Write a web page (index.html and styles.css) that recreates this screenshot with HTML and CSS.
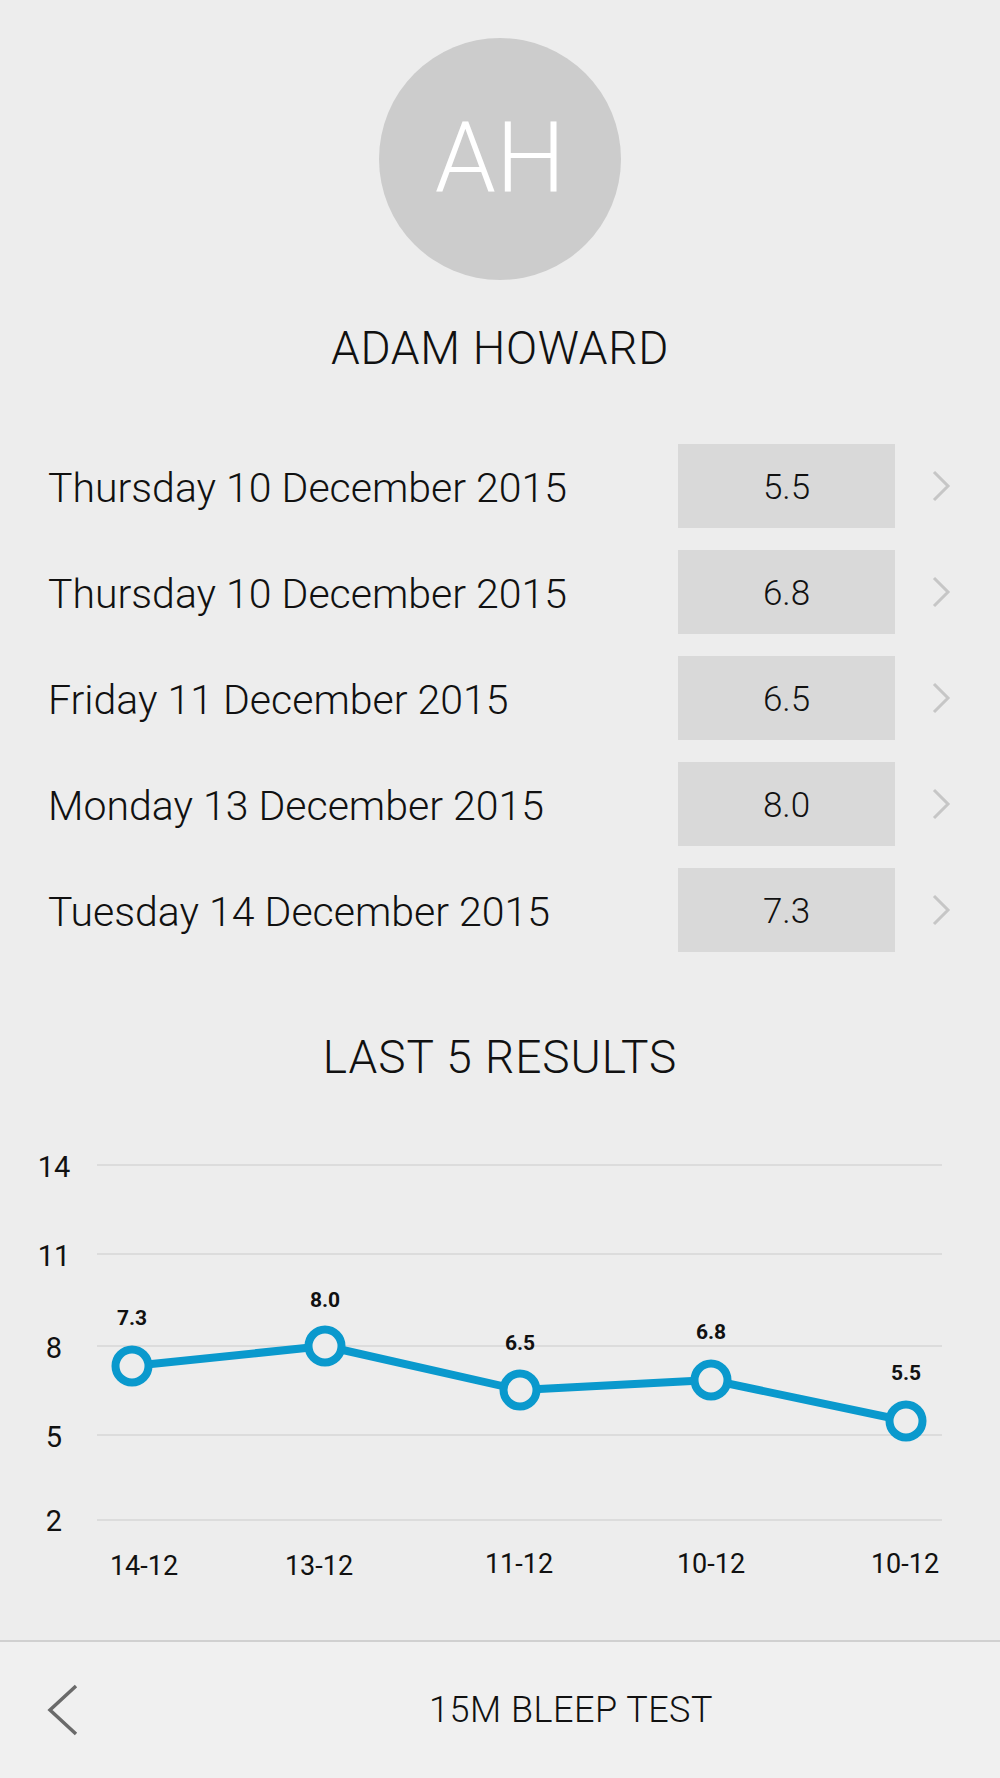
FILE: index.html
```html
<!DOCTYPE html>
<html lang="en">
<head>
<meta charset="utf-8">
<title>Adam Howard - 15M Bleep Test</title>
<link rel="stylesheet" href="styles.css">
</head>
<body>
<main class="content">
  <div class="avatar">AH</div>
  <h1 class="name">ADAM HOWARD</h1>

  <ul class="results">
    <li class="result">
      <span class="date">Thursday 10 December 2015</span>
      <span class="score">5.5</span>
      <svg class="chev" viewBox="0 0 20 32" width="20" height="32"><path d="M3 2 L17 16 L3 30"/></svg>
    </li>
    <li class="result">
      <span class="date">Thursday 10 December 2015</span>
      <span class="score">6.8</span>
      <svg class="chev" viewBox="0 0 20 32" width="20" height="32"><path d="M3 2 L17 16 L3 30"/></svg>
    </li>
    <li class="result">
      <span class="date">Friday 11 December 2015</span>
      <span class="score">6.5</span>
      <svg class="chev" viewBox="0 0 20 32" width="20" height="32"><path d="M3 2 L17 16 L3 30"/></svg>
    </li>
    <li class="result">
      <span class="date">Monday 13 December 2015</span>
      <span class="score">8.0</span>
      <svg class="chev" viewBox="0 0 20 32" width="20" height="32"><path d="M3 2 L17 16 L3 30"/></svg>
    </li>
    <li class="result">
      <span class="date">Tuesday 14 December 2015</span>
      <span class="score">7.3</span>
      <svg class="chev" viewBox="0 0 20 32" width="20" height="32"><path d="M3 2 L17 16 L3 30"/></svg>
    </li>
  </ul>

  <h2 class="section-title">LAST 5 RESULTS</h2>

  <svg class="chart" viewBox="0 0 1000 480" width="1000" height="480">
    <g class="grid">
      <line x1="97" x2="942" y1="45" y2="45"/>
      <line x1="97" x2="942" y1="134" y2="134"/>
      <line x1="97" x2="942" y1="226" y2="226"/>
      <line x1="97" x2="942" y1="315" y2="315"/>
      <line x1="97" x2="942" y1="400" y2="400"/>
    </g>
    <g class="ylabels">
      <text x="54" y="57">14</text>
      <text x="54" y="146">11</text>
      <text x="54" y="238">8</text>
      <text x="54" y="327">5</text>
      <text x="54" y="411">2</text>
    </g>
    <polyline class="series" points="132,246 325,226 520,270 711,260 906,301"/>
    <g class="markers">
      <circle cx="132" cy="246" r="16.5"/>
      <circle cx="325" cy="226" r="16.5"/>
      <circle cx="520" cy="270" r="16.5"/>
      <circle cx="711" cy="260" r="16.5"/>
      <circle cx="906" cy="301" r="16.5"/>
    </g>
    <g class="vlabels">
      <text x="132" y="205">7.3</text>
      <text x="325" y="187">8.0</text>
      <text x="520" y="230">6.5</text>
      <text x="711" y="219">6.8</text>
      <text x="906" y="260">5.5</text>
    </g>
    <g class="xlabels">
      <text x="144" y="455">14-12</text>
      <text x="319" y="455">13-12</text>
      <text x="519" y="453">11-12</text>
      <text x="711" y="453">10-12</text>
      <text x="905" y="453">10-12</text>
    </g>
  </svg>
</main>

<footer class="bar">
  <div class="back">
    <svg viewBox="0 0 32 52" width="32" height="52"><path d="M29 2 L3 26 L29 50"/></svg>
  </div>
  <div class="bar-title">15M BLEEP TEST</div>
</footer>
</body>
</html>
```

FILE: styles.css
```css
* { box-sizing: border-box; }

html, body {
  margin: 0;
  padding: 0;
}

body {
  width: 1000px;
  height: 1778px;
  display: flex;
  flex-direction: column;
  background: #ededed;
  color: #111;
  font-family: "Helvetica Neue", Roboto, "Liberation Sans", sans-serif;
  font-weight: 300;
}

.content {
  flex: 1;
  display: flex;
  flex-direction: column;
  align-items: stretch;
  padding-top: 38px;
}

.avatar {
  width: 242px;
  height: 242px;
  margin: 0 auto;
  border-radius: 50%;
  background: #cccccc;
  color: #ffffff;
  font-size: 98px;
  line-height: 242px;
  text-align: center;
  font-weight: 300;
}

.name {
  margin: 45px 0 0;
  font-size: 46px;
  line-height: 46px;
  letter-spacing: 0.7px;
  font-weight: 300;
  text-align: center;
}

.results {
  list-style: none;
  margin: 73px 0 0;
  padding: 0;
  display: flex;
  flex-direction: column;
  gap: 22px;
}

.result {
  height: 84px;
  display: flex;
  align-items: center;
  padding: 0 49px 0 48px;
}

.date {
  flex: 1;
  padding-top: 4px;
  font-size: 41px;
  font-weight: 300;
}

.score {
  width: 217px;
  height: 84px;
  background: #d9d9d9;
  display: flex;
  align-items: center;
  justify-content: center;
  padding-top: 3px;
  font-size: 35px;
  font-weight: 300;
}

.chev {
  margin-left: 36px;
  width: 20px;
  height: 32px;
}

.chev path {
  fill: none;
  stroke: #c6c6c6;
  stroke-width: 3;
}

.section-title {
  margin: 82px 0 0;
  font-size: 46px;
  line-height: 46px;
  letter-spacing: 1px;
  font-weight: 300;
  text-align: center;
}

.chart {
  display: block;
  margin-top: 40px;
}

.grid line {
  stroke: #dcdcdc;
  stroke-width: 2;
}

.ylabels text {
  font-family: "Helvetica Neue", Roboto, "Liberation Sans", sans-serif;
  font-size: 29px;
  font-weight: 400;
  fill: #111;
  text-anchor: middle;
}

.series {
  fill: none;
  stroke: #0a99cd;
  stroke-width: 8;
  stroke-linejoin: round;
}

.markers circle {
  fill: #ededed;
  stroke: #0a99cd;
  stroke-width: 8;
}

.vlabels text {
  font-family: "Helvetica Neue", Roboto, "Liberation Sans", sans-serif;
  font-size: 21px;
  font-weight: 700;
  fill: #111;
  text-anchor: middle;
}

.xlabels text {
  font-family: "Helvetica Neue", Roboto, "Liberation Sans", sans-serif;
  font-size: 27px;
  font-weight: 400;
  fill: #111;
  text-anchor: middle;
}

.bar {
  height: 138px;
  flex: none;
  border-top: 2px solid #d0d0d0;
  background: #f0f0f0;
  display: flex;
  align-items: center;
}

.back {
  width: 142px;
  padding-left: 47px;
  display: flex;
  align-items: center;
}

.back path {
  fill: none;
  stroke: #6a6a6a;
  stroke-width: 3.5;
}

.bar-title {
  flex: 1;
  text-align: center;
  font-size: 36px;
  letter-spacing: 0.5px;
  font-weight: 300;
}
```
